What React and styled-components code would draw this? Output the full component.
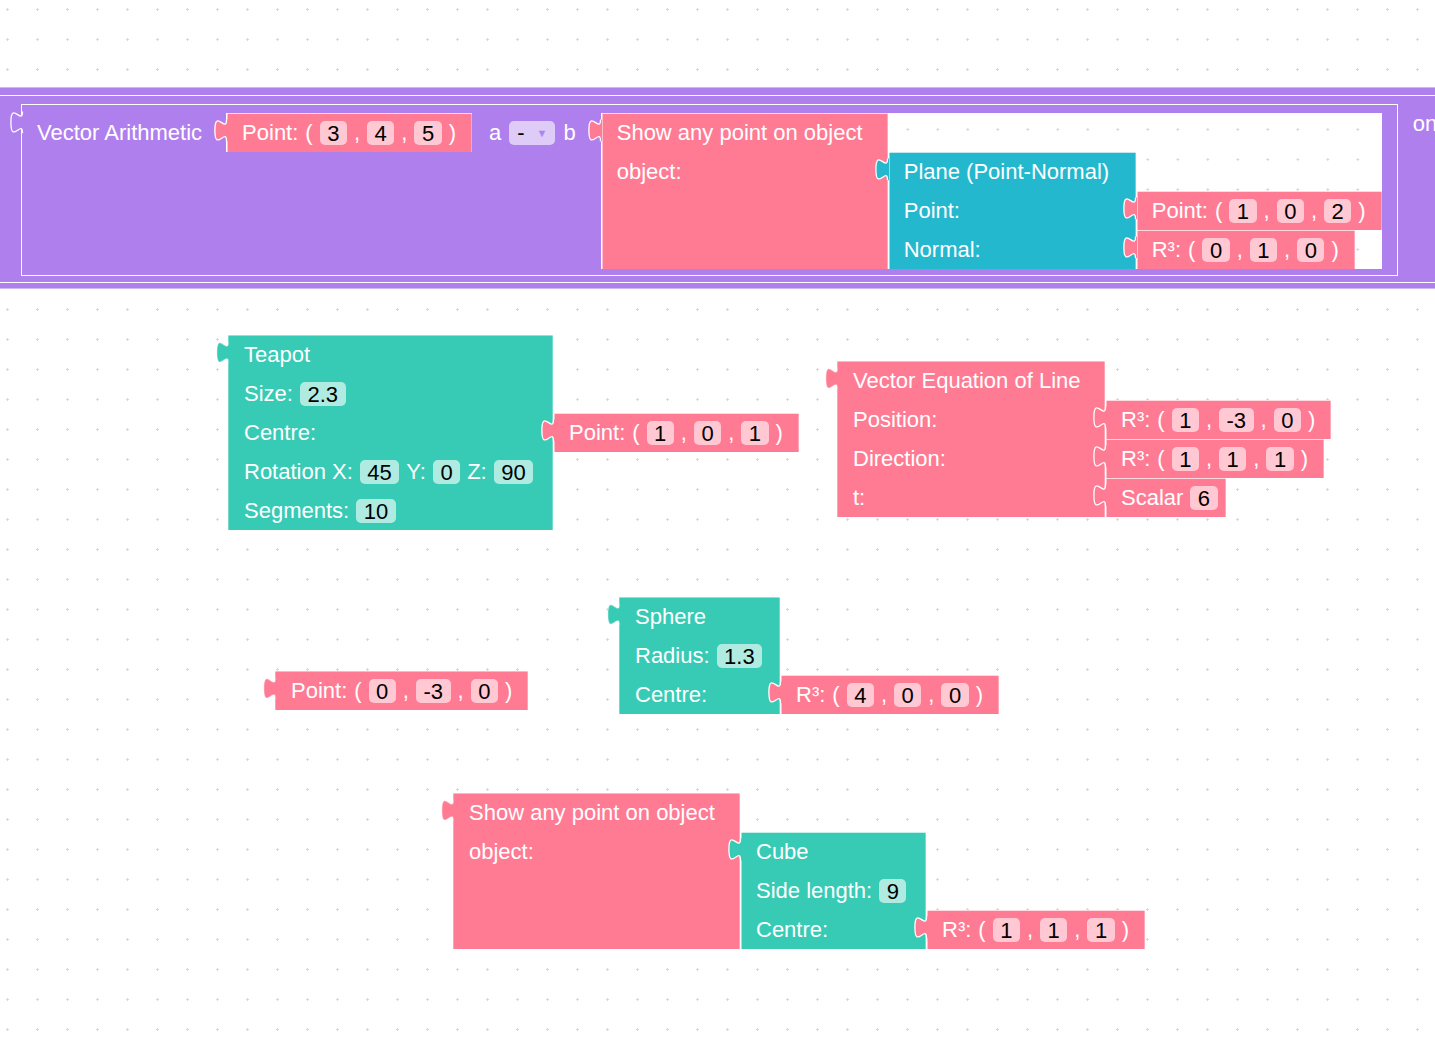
import React from 'react';
import styled, { createGlobalStyle, css } from 'styled-components';

const ROW = 39;

const tones = {
    pink: { bg: '#ff7b93', field: '#ffc8d2' },
    teal: { bg: '#37cbb5', field: '#afebe1' },
    cyan: { bg: '#24b8cf', field: '#a9e5ef' },
    purple: { bg: '#b07fee', field: '#dfcbf8' },
};

const GlobalStyle = createGlobalStyle`
    html, body {
        margin: 0;
        padding: 0;
        overflow: hidden;
        background: #fff;
    }
    body {
        font-family: 'Liberation Sans', Arial, sans-serif;
    }
`;

// workspace grid: tiny crosses every 30px
const gridDots = css`
    background-color: #fff;
    background-image:
        radial-gradient(ellipse 1.7px 0.7px at 7.5px 9.5px, #d3d9e6 99%, transparent 100%),
        radial-gradient(ellipse 0.7px 1.7px at 7.5px 9.5px, #d3d9e6 99%, transparent 100%);
    background-size: 30px 30px;
    background-attachment: fixed;
`;

const Styled = {
    Workspace: styled.div`
        position: relative;
        width: 100vw;
        height: 100vh;
        overflow: hidden;
        ${gridDots}
        font-family: 'Liberation Sans', Arial, sans-serif;
        font-size: 22px;
        color: #fff;
    `,
    Spot: styled.div`
        position: absolute;
        left: ${({ $x }) => $x}px;
        top: ${({ $y }) => $y}px;
    `,
    Group: styled.div`
        display: flex;
        align-items: stretch;
    `,
    Inputs: styled.div`
        display: flex;
        flex-direction: column;
        align-items: flex-start;
        align-self: flex-start;
        padding-top: ${({ $offset }) => $offset}px;
    `,
    Body: styled.div`
        position: relative;
        flex-shrink: 0;
        box-sizing: border-box;
        width: ${({ $w }) => ($w ? `${$w}px` : 'auto')};
        padding: 0 16px;
        background: ${({ $tone }) => tones[$tone].bg};
        box-shadow: inset 0 1px 0 rgba(255, 255, 255, 0.45),
            inset 1px 0 0 rgba(255, 255, 255, 0.3),
            inset -1px 0 0 rgba(255, 255, 255, 0.3);
        ${({ $nested }) => $nested && css`
            box-shadow: inset 1.5px 0 0 #fff,
                inset 0 1px 0 rgba(255, 255, 255, 0.7),
                inset -1px 0 0 rgba(255, 255, 255, 0.35);
        `}
    `,
    Row: styled.div`
        display: flex;
        align-items: center;
        gap: 7px;
        height: ${ROW}px;
        white-space: nowrap;
    `,
    Field: styled.span`
        display: inline-block;
        height: 24px;
        line-height: 25px;
        padding: 0 7.5px;
        border-radius: 5px;
        background: ${({ $tone }) => tones[$tone].field};
        color: #000;
    `,
    TabSvg: styled.svg`
        position: absolute;
        left: -12.5px;
        top: 6px;
        overflow: visible;
    `,
    Shell: styled.div`
        position: absolute;
        left: -40px;
        top: 87px;
        background: ${tones.purple.bg};
        border: 1px solid #d2b7f7;
        padding: 7px 80px 5px 19px;
    `,
    Frame: styled.div`
        display: flex;
        align-items: flex-start;
        border: 1px solid #fff;
        padding: 8px 80px 6px 40px;
    `,
    Arith: styled.div`
        position: relative;
        display: flex;
        align-items: flex-start;
        border: 1px solid #fff;
        padding: 8px 15px 6px 15px;
        white-space: nowrap;
    `,
    Caption: styled.span`
        line-height: 40px;
        margin-right: ${({ $gap }) => $gap || 0}px;
    `,
    Pair: styled.div`
        display: flex;
        align-items: center;
        gap: 8px;
        height: 40px;
        margin: 0 25px 0 17px;
    `,
    Dropdown: styled.span`
        display: inline-flex;
        align-items: center;
        height: 24px;
        padding: 0 8px;
        border-radius: 5px;
        background: ${tones.purple.field};
        color: #000;
        & .arrow {
            margin-left: 12px;
            font-size: 11px;
            color: #ad86ea;
        }
    `,
    Slot: styled.div`
        display: flex;
        ${gridDots}
    `,
    Trail: styled.span`
        line-height: 39px;
        margin-left: 15px;
    `,
};

function Tab({ tone, nested }) {
    const curve = 'M12.5,0.5 c0,14.5 -11.6,-11.6 -11.6,10.9 s11.6,-3.6 11.6,10.9';
    return (
        <Styled.TabSvg width="14" height="24" viewBox="0 0 14 24">
            <path d={`M14,0.5 H12.5 c0,14.5 -11.6,-11.6 -11.6,10.9 s11.6,-3.6 11.6,10.9 H14 Z`} fill={tones[tone].bg} />
            <path d={curve} fill="none" stroke={nested ? '#fff' : 'rgba(255,255,255,0.35)'} strokeWidth="1.3" />
        </Styled.TabSvg>
    );
}

function Node({ spec, nested }) {
    const body = (
        <Styled.Body $tone={spec.tone} $w={spec.w} $nested={nested}>
            <Tab tone={spec.tone} nested={nested} />
            {spec.rows.map((row, i) => (
                <Styled.Row key={i}>
                    {row.map((it, j) => (typeof it === 'object'
                        ? <Styled.Field key={j} $tone={spec.tone}>{it.f}</Styled.Field>
                        : <span key={j}>{it}</span>))}
                </Styled.Row>
            ))}
        </Styled.Body>
    );
    if (!spec.kids) return body;
    return (
        <Styled.Group>
            {body}
            <Styled.Inputs $offset={spec.at * ROW}>
                {spec.kids.map((k, i) => <Node key={i} spec={k} nested />)}
            </Styled.Inputs>
        </Styled.Group>
    );
}

const vec = (label, [a, b, c], extra = {}) => ({
    tone: 'pink',
    rows: [[label, '(', { f: a }, ',', { f: b }, ',', { f: c }, ')']],
    ...extra,
});

const showOn = (child) => ({
    tone: 'pink',
    w: 287,
    rows: [['Show any point on object'], ['object:']],
    at: 1,
    kids: [child],
});

const teapot = {
    tone: 'teal',
    w: 325,
    rows: [
        ['Teapot'],
        ['Size:', { f: '2.3' }],
        ['Centre:'],
        ['Rotation X:', { f: '45' }, 'Y:', { f: '0' }, 'Z:', { f: '90' }],
        ['Segments:', { f: '10' }],
    ],
    at: 2,
    kids: [vec('Point:', [1, 0, 1])],
};

const lineEq = {
    tone: 'pink',
    w: 268,
    rows: [['Vector Equation of Line'], ['Position:'], ['Direction:'], ['t:']],
    at: 1,
    kids: [
        vec('R³:', [1, -3, 0]),
        vec('R³:', [1, 1, 1]),
        { tone: 'pink', w: 121, rows: [['Scalar', { f: 6 }]] },
    ],
};

const sphere = {
    tone: 'teal',
    w: 161,
    rows: [['Sphere'], ['Radius:', { f: '1.3' }], ['Centre:']],
    at: 2,
    kids: [vec('R³:', [4, 0, 0])],
};

const cubePoint = showOn({
    tone: 'teal',
    w: 186,
    rows: [['Cube'], ['Side length:', { f: 9 }], ['Centre:']],
    at: 2,
    kids: [vec('R³:', [1, 1, 1])],
});

const planePoint = showOn({
    tone: 'cyan',
    w: 248,
    rows: [['Plane (Point-Normal)'], ['Point:'], ['Normal:']],
    at: 1,
    kids: [vec('Point:', [1, 0, 2]), vec('R³:', [0, 1, 0])],
});

function ArithmeticBand() {
    return (
        <Styled.Shell>
            <Styled.Frame>
                <Styled.Arith>
                    <Tab tone="purple" nested />
                    <Styled.Caption $gap={24}>Vector Arithmetic</Styled.Caption>
                    <Node spec={vec('Point:', [3, 4, 5])} nested />
                    <Styled.Pair>
                        <span>a</span>
                        <Styled.Dropdown>
                            -<span className="arrow">▼</span>
                        </Styled.Dropdown>
                        <span>b</span>
                    </Styled.Pair>
                    <Styled.Slot>
                        <Node spec={planePoint} nested />
                    </Styled.Slot>
                </Styled.Arith>
                <Styled.Trail>on</Styled.Trail>
            </Styled.Frame>
        </Styled.Shell>
    );
}

const placed = [
    { x: 228, y: 335, spec: teapot },
    { x: 837, y: 361, spec: lineEq },
    { x: 619, y: 597, spec: sphere },
    { x: 275, y: 671, spec: vec('Point:', [0, -3, 0]) },
    { x: 453, y: 793, spec: cubePoint },
];

export default function App() {
    return (
        <>
            <GlobalStyle />
            <Styled.Workspace>
                <ArithmeticBand />
                {placed.map((p, i) => (
                    <Styled.Spot key={i} $x={p.x} $y={p.y}>
                        <Node spec={p.spec} />
                    </Styled.Spot>
                ))}
            </Styled.Workspace>
        </>
    );
}
